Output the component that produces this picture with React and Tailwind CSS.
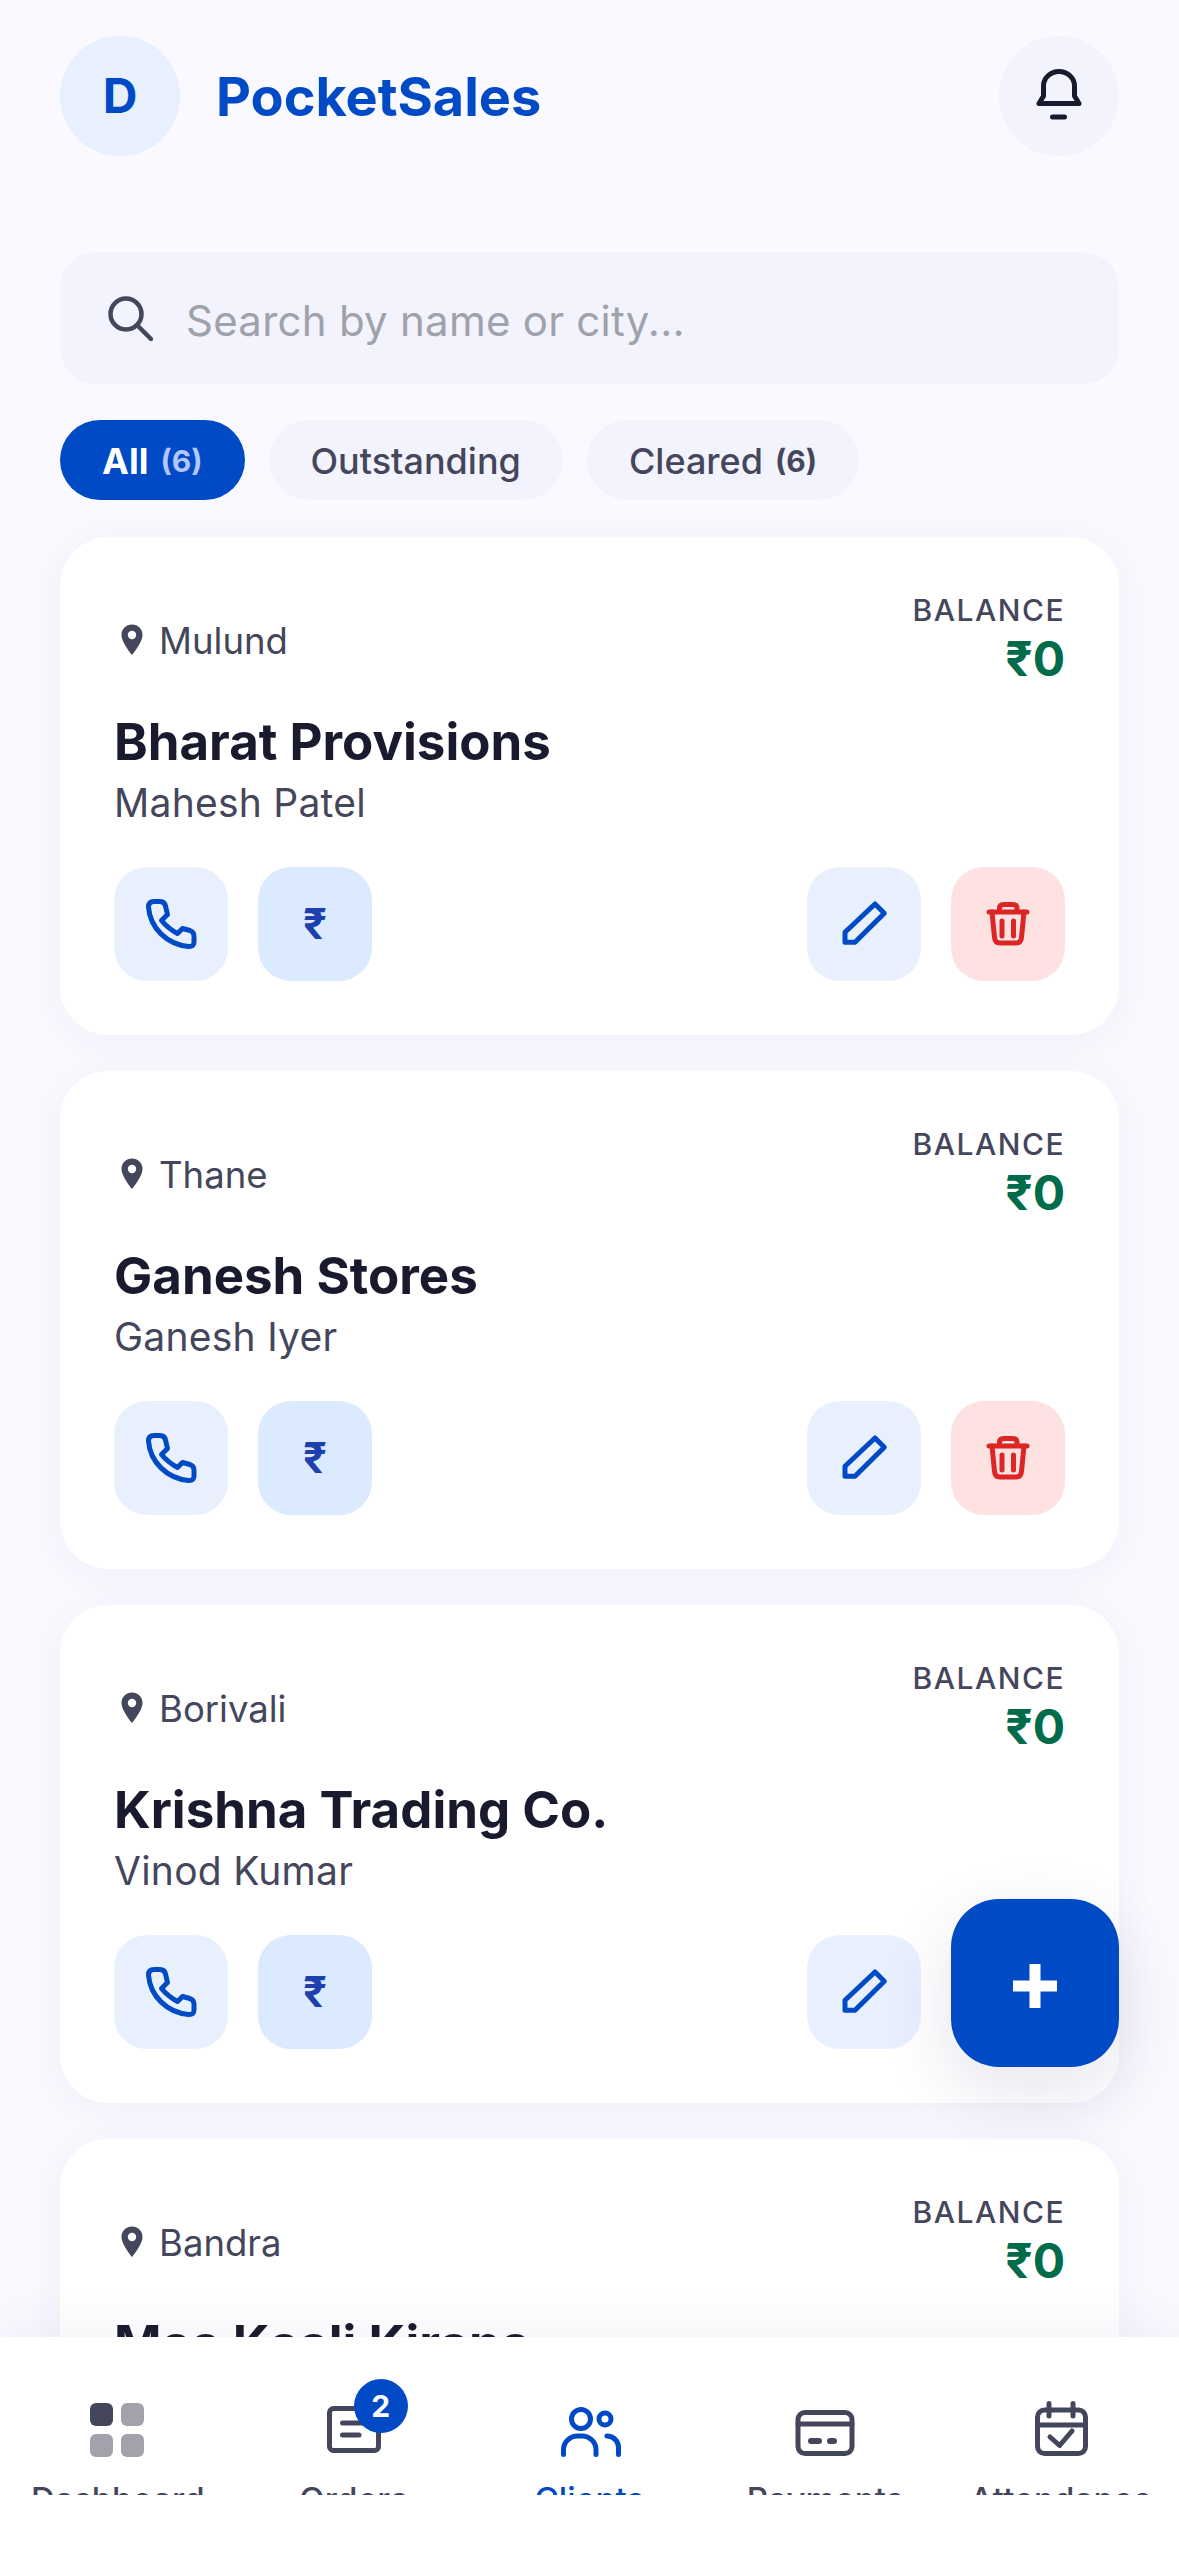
const CLIENTS = [
  { city: 'Mulund', name: 'Bharat Provisions', contact: 'Mahesh Patel' },
  { city: 'Thane', name: 'Ganesh Stores', contact: 'Ganesh Iyer' },
  { city: 'Borivali', name: 'Krishna Trading Co.', contact: 'Vinod Kumar' },
  { city: 'Bandra', name: 'Maa Kaali Kirana', contact: 'Sunita Devi' },
];

function Icon({ children, className = '', width = 5 }) {
  return (
    <svg
      viewBox="0 0 60 60"
      fill="none"
      stroke="currentColor"
      strokeWidth={width}
      strokeLinecap="round"
      strokeLinejoin="round"
      className={`w-[60px] h-[60px] overflow-visible ${className}`}
    >
      {children}
    </svg>
  );
}

function Pin() {
  return (
    <svg viewBox="0 0 36 36" className="w-[36px] h-[36px]">
      <path
        fillRule="evenodd"
        fill="#44465c"
        d="M18 2.500C12.200 2.500 7.500 7.100 7.500 13c0 7.500 10.500 20 10.500 20s10.500-12.500 10.500-20C28.500 7.100 23.800 2.500 18 2.500Zm0 6.300a4.200 4.200 0 1 1 0 8.400 4.200 4.200 0 0 1 0-8.400Z"
      />
    </svg>
  );
}

function ActionButton({ bg, children }) {
  return (
    <button className={`w-[114px] h-[114px] rounded-[33px] flex items-center justify-center ${bg}`}>
      {children}
    </button>
  );
}

function ClientCard({ city, name, contact }) {
  return (
    <div className="bg-white rounded-[48px] p-[54px] shadow-[0_6px_40px_rgba(60,60,130,0.05)] shrink-0">
      <div className="flex items-center justify-between">
        <div className="flex items-center gap-[9px] text-[36.5px] leading-[48px] text-[#44465c]">
          <Pin />
          <span className="pt-[2px]">{city}</span>
        </div>
        <div className="text-right">
          <p className="text-[30px] leading-[39px] font-medium tracking-[1.5px] text-[#44465c]">BALANCE</p>
          <p className="text-[48px] leading-[58px] font-bold text-[#006c4a]">₹0</p>
        </div>
      </div>
      <h2 className="mt-[24px] text-[51px] leading-[60px] font-bold text-[#1a1a2e]">{name}</h2>
      <p className="mt-[4px] text-[39px] leading-[54px] tracking-[0.25px] text-[#44465c]">{contact}</p>
      <div className="mt-[37px] flex items-center justify-between">
        <div className="flex gap-[30px]">
          <ActionButton bg="bg-[#e8f0fe]">
            <Icon className="text-[#004ac6]">
              <path d="M13 7.500H19Q23.500 7.500 24.500 12L26.500 20.500L20.500 26.500Q26.500 34 36.500 39.500L41.500 34.500L49 36.500Q53 38 53 42V48Q53 53 47.500 52.500C26 50.500 9 34 7.500 13Q7.500 7.500 13 7.500Z" />
            </Icon>
          </ActionButton>
          <ActionButton bg="bg-[#dbeafe]">
            <span className="text-[42px] leading-none font-bold text-[#1e40af]">₹</span>
          </ActionButton>
        </div>
        <div className="flex gap-[30px]">
          <ActionButton bg="bg-[#e8f0fe]">
            <Icon className="text-[#004ac6]">
              <path d="M41 10L50.300 19.300L21 48.300H11V38.300Z" />
            </Icon>
          </ActionButton>
          <ActionButton bg="bg-[#fee2e2]">
            <Icon className="text-[#dc2626]">
              <path d="M11 18H49" />
              <path d="M21.500 17V14.500Q21.500 10.500 25.500 10.500H35Q39 10.500 39 14.500V17" />
              <path d="M14 18L16.500 43.500Q17 49 22 49H38Q43 49 43.500 43.500L46 18" />
              <path d="M24 27V42M35.500 27V42" />
            </Icon>
          </ActionButton>
        </div>
      </div>
    </div>
  );
}

function Filter({ active, label, count }) {
  return (
    <button
      className={`h-[80px] px-[42px] rounded-full text-[36px] flex items-center gap-[12px] ${
        active ? 'bg-[#004ac6] text-white font-bold' : 'bg-[#f3f3fe] text-[#44465c] font-medium'
      }`}
    >
      <span className="pt-[2px]">{label}</span>
      {count && (
        <span className={`pt-[3px] text-[30px] font-bold ${active ? 'text-[#b4c5ff]' : 'text-[#44465c]'}`}>({count})</span>
      )}
    </button>
  );
}

const NAV = [
  {
    label: 'Dashboard',
    icon: (
      <svg viewBox="0 0 60 60" className="w-[60px] h-[60px]">
        <rect x="2" y="3" width="23" height="23" rx="6" fill="#44465c" />
        <rect x="33" y="3" width="23" height="23" rx="6" fill="#a1a2ab" />
        <rect x="2" y="34" width="23" height="23" rx="6" fill="#a1a2ab" />
        <rect x="33" y="34" width="23" height="23" rx="6" fill="#a1a2ab" />
      </svg>
    ),
  },
  {
    label: 'Orders',
    badge: 2,
    icon: (
      <Icon>
        <rect x="5.500" y="8.500" width="49" height="42" rx="4" />
        <path d="M18.500 23H40M18.500 35H35" />
      </Icon>
    ),
  },
  {
    label: 'Clients',
    active: true,
    icon: (
      <Icon>
        <circle cx="22" cy="19" r="9.500" />
        <circle cx="46" cy="19" r="6" />
        <path d="M4.500 54.500V50A14 14 0 0 1 18.500 36H23A14 14 0 0 1 37 50V54.500" />
        <path d="M48 36A11.500 11.500 0 0 1 59.500 47.500V54.500" />
      </Icon>
    ),
  },
  {
    label: 'Payments',
    icon: (
      <Icon>
        <rect x="3" y="12.500" width="54" height="41" rx="7" />
        <path d="M3 24H57" />
        <path d="M16 41H24M35 41H39" strokeWidth={6} />
      </Icon>
    ),
  },
  {
    label: 'Attendance',
    icon: (
      <Icon>
        <rect x="6.500" y="10" width="48" height="43.500" rx="7" />
        <path d="M6.500 25H54.500" />
        <path d="M18 3.500V16M42 3.500V16" />
        <path d="M19 37L28.600 45.500L41 31" />
      </Icon>
    ),
  },
];

function BottomNav() {
  return (
    <nav className="h-[216px] shrink-0 bg-white relative z-10 shadow-[0_-10px_50px_rgba(60,60,130,0.06)]">
      <div className="h-[158px] overflow-hidden grid grid-cols-5 pt-[63px]">
        {NAV.map((item) => (
          <div key={item.label} className="flex flex-col items-center">
            <div className={`relative w-[60px] h-[60px] ${item.active ? 'text-[#004ac6]' : 'text-[#44465c]'}`}>
              {item.icon}
              {item.badge && (
                <span className="absolute left-[30px] top-[-21px] w-[54px] h-[54px] rounded-full bg-[#004ac6] text-white text-[30px] font-bold flex items-center justify-center">
                  {item.badge}
                </span>
              )}
            </div>
            <span
              className={`mt-[20px] text-[33px] leading-[39px] font-medium tracking-[0.2px] whitespace-nowrap ${
                item.active ? 'text-[#004ac6]' : 'text-[#44465c]'
              }`}
            >
              {item.label}
            </span>
          </div>
        ))}
      </div>
    </nav>
  );
}

export default function App() {
  return (
    <div className="relative w-[1179px] h-[2553px] overflow-hidden flex flex-col bg-[#f9f9ff] font-[Inter,sans-serif]">
      <main className="flex-1 min-h-0 overflow-hidden px-[60px] pt-[36px]">
        {/* Header */}
        <header className="flex items-center justify-between">
          <div className="flex items-center gap-[36px]">
            <div className="w-[120px] h-[120px] rounded-full bg-[#e8f0fe] flex items-center justify-center text-[48px] font-bold text-[#004ac6]">
              D
            </div>
            <h1 className="text-[54px] font-bold text-[#004ac6]">PocketSales</h1>
          </div>
          <button className="w-[120px] h-[120px] rounded-full bg-[#f3f3fe] flex items-center justify-center">
            <Icon className="text-[#1a1a2e]">
              <path d="M10 37.500H50L45.500 30V20A15.500 14.500 0 0 0 14.500 20V30Z" />
              <path d="M23.500 51H35.500" />
            </Icon>
          </button>
        </header>

        {/* Search */}
        <div className="mt-[96px] h-[132px] rounded-[36px] bg-[#f3f3fe] flex items-center pl-[48px] gap-[33px]">
          <svg viewBox="0 0 45 45" fill="none" stroke="#44465c" strokeWidth="4.500" strokeLinecap="round" className="w-[45px] h-[45px]">
            <circle cx="18" cy="18" r="15.500" />
            <path d="M29.500 29.500L43 43" />
          </svg>
          <span className="pt-[4px] text-[42px] tracking-[0.25px] text-[#9fa1ab]">Search by name or city...</span>
        </div>

        {/* Filters */}
        <div className="mt-[36px] flex gap-[24px]">
          <Filter active label="All" count={6} />
          <Filter label="Outstanding" />
          <Filter label="Cleared" count={6} />
        </div>

        {/* Client list */}
        <div className="mt-[37px] flex flex-col gap-[36px]">
          {CLIENTS.map((c) => (
            <ClientCard key={c.name} {...c} />
          ))}
        </div>
      </main>

      <button className="absolute left-[951px] top-[1899px] z-20 w-[168px] h-[168px] rounded-[48px] bg-[#004ac6] flex items-center justify-center shadow-[0_24px_70px_rgba(40,40,110,0.12)]">
        <svg viewBox="0 0 44 44" className="w-[44px] h-[44px] mt-[5px]" fill="white">
          <path d="M16.500 0H27.500V16.500H44V27.500H27.500V44H16.500V27.500H0V16.500H16.500Z" />
        </svg>
      </button>

      <BottomNav />
    </div>
  );
}
